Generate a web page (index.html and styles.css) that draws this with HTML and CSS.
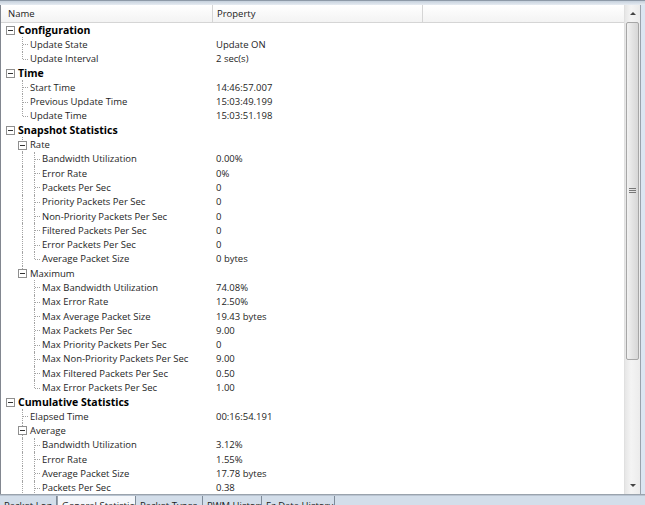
FILE: index.html
```html
<!DOCTYPE html>
<html lang="en">
<head>
    <meta charset="UTF-8">
    <title>General Statistics</title>
    <link rel="stylesheet" href="styles.css">
</head>
<body>
<div class="window">
    <div class="frame-top"></div>
    <div class="main">
        <div class="grid">
            <!-- Column header -->
            <div class="header">
                <div class="hcell hname">Name</div>
                <div class="hcell hprop">Property</div>
                <div class="hcell hrest"></div>
            </div>

            <div class="rows">
                <div class="row"><div class="name"><span class="g box"></span><span class="t root">Configuration</span></div><div class="val"></div></div>
                <div class="row"><div class="name"><span class="g"></span><span class="g tee"></span><span class="t">Update State</span></div><div class="val">Update ON</div></div>
                <div class="row"><div class="name"><span class="g"></span><span class="g elbow"></span><span class="t">Update Interval</span></div><div class="val">2 sec(s)</div></div>

                <div class="row"><div class="name"><span class="g box"></span><span class="t root">Time</span></div><div class="val"></div></div>
                <div class="row"><div class="name"><span class="g"></span><span class="g tee"></span><span class="t">Start Time</span></div><div class="val">14:46:57.007</div></div>
                <div class="row"><div class="name"><span class="g"></span><span class="g tee"></span><span class="t">Previous Update Time</span></div><div class="val">15:03:49.199</div></div>
                <div class="row"><div class="name"><span class="g"></span><span class="g elbow"></span><span class="t">Update Time</span></div><div class="val">15:03:51.198</div></div>

                <div class="row"><div class="name"><span class="g box"></span><span class="t root">Snapshot Statistics</span></div><div class="val"></div></div>
                <div class="row"><div class="name"><span class="g"></span><span class="g box full"></span><span class="t">Rate</span></div><div class="val"></div></div>
                <div class="row"><div class="name"><span class="g"></span><span class="g pipe"></span><span class="g tee"></span><span class="t">Bandwidth Utilization</span></div><div class="val">0.00%</div></div>
                <div class="row"><div class="name"><span class="g"></span><span class="g pipe"></span><span class="g tee"></span><span class="t">Error Rate</span></div><div class="val">0%</div></div>
                <div class="row"><div class="name"><span class="g"></span><span class="g pipe"></span><span class="g tee"></span><span class="t">Packets Per Sec</span></div><div class="val">0</div></div>
                <div class="row"><div class="name"><span class="g"></span><span class="g pipe"></span><span class="g tee"></span><span class="t">Priority Packets Per Sec</span></div><div class="val">0</div></div>
                <div class="row"><div class="name"><span class="g"></span><span class="g pipe"></span><span class="g tee"></span><span class="t">Non-Priority Packets Per Sec</span></div><div class="val">0</div></div>
                <div class="row"><div class="name"><span class="g"></span><span class="g pipe"></span><span class="g tee"></span><span class="t">Filtered Packets Per Sec</span></div><div class="val">0</div></div>
                <div class="row"><div class="name"><span class="g"></span><span class="g pipe"></span><span class="g tee"></span><span class="t">Error Packets Per Sec</span></div><div class="val">0</div></div>
                <div class="row"><div class="name"><span class="g"></span><span class="g pipe"></span><span class="g elbow"></span><span class="t">Average Packet Size</span></div><div class="val">0 bytes</div></div>
                <div class="row"><div class="name"><span class="g"></span><span class="g box last"></span><span class="t">Maximum</span></div><div class="val"></div></div>
                <div class="row"><div class="name"><span class="g"></span><span class="g"></span><span class="g tee"></span><span class="t">Max Bandwidth Utilization</span></div><div class="val">74.08%</div></div>
                <div class="row"><div class="name"><span class="g"></span><span class="g"></span><span class="g tee"></span><span class="t">Max Error Rate</span></div><div class="val">12.50%</div></div>
                <div class="row"><div class="name"><span class="g"></span><span class="g"></span><span class="g tee"></span><span class="t">Max Average Packet Size</span></div><div class="val">19.43 bytes</div></div>
                <div class="row"><div class="name"><span class="g"></span><span class="g"></span><span class="g tee"></span><span class="t">Max Packets Per Sec</span></div><div class="val">9.00</div></div>
                <div class="row"><div class="name"><span class="g"></span><span class="g"></span><span class="g tee"></span><span class="t">Max Priority Packets Per Sec</span></div><div class="val">0</div></div>
                <div class="row"><div class="name"><span class="g"></span><span class="g"></span><span class="g tee"></span><span class="t">Max Non-Priority Packets Per Sec</span></div><div class="val">9.00</div></div>
                <div class="row"><div class="name"><span class="g"></span><span class="g"></span><span class="g tee"></span><span class="t">Max Filtered Packets Per Sec</span></div><div class="val">0.50</div></div>
                <div class="row"><div class="name"><span class="g"></span><span class="g"></span><span class="g elbow"></span><span class="t">Max Error Packets Per Sec</span></div><div class="val">1.00</div></div>

                <div class="row"><div class="name"><span class="g box"></span><span class="t root">Cumulative Statistics</span></div><div class="val"></div></div>
                <div class="row"><div class="name"><span class="g"></span><span class="g tee"></span><span class="t">Elapsed Time</span></div><div class="val">00:16:54.191</div></div>
                <div class="row"><div class="name"><span class="g"></span><span class="g box full"></span><span class="t">Average</span></div><div class="val"></div></div>
                <div class="row"><div class="name"><span class="g"></span><span class="g pipe"></span><span class="g tee"></span><span class="t">Bandwidth Utilization</span></div><div class="val">3.12%</div></div>
                <div class="row"><div class="name"><span class="g"></span><span class="g pipe"></span><span class="g tee"></span><span class="t">Error Rate</span></div><div class="val">1.55%</div></div>
                <div class="row"><div class="name"><span class="g"></span><span class="g pipe"></span><span class="g tee"></span><span class="t">Average Packet Size</span></div><div class="val">17.78 bytes</div></div>
                <div class="row"><div class="name"><span class="g"></span><span class="g pipe"></span><span class="g tee"></span><span class="t">Packets Per Sec</span></div><div class="val">0.38</div></div>
            </div>
        </div>

        <!-- Vertical scrollbar -->
        <div class="scrollbar">
            <div class="sb-btn"><span class="arrow-up"></span></div>
            <div class="sb-thumb"><span class="grip"></span></div>
            <div class="sb-track"></div>
            <div class="sb-btn"><span class="arrow-down"></span></div>
        </div>
        <div class="frame-right"></div>
    </div>

    <!-- Tabs -->
    <div class="tabs">
        <div class="tab w1">Packet Log</div>
        <div class="tab w2 active">General Statistics</div>
        <div class="tab w3">Packet Types</div>
        <div class="tab w4">PWM History</div>
        <div class="tab w5">Ez Data History</div>
    </div>
</div>
</body>
</html>
```

FILE: styles.css
```css
body {
    margin: 0;
    width: 645px;
    height: 505px;
    overflow: hidden;
    font-family: 'Open Sans', 'Noto Sans', sans-serif;
    font-size: 9.5px;
    color: #1e1e1e;
    background: #dbe5f1;
}

.window {
    display: flex;
    flex-direction: column;
    height: 505px;
}

.frame-top {
    flex: none;
    height: 4px;
    border-top: 1px solid #8d99a7;
    background: linear-gradient(#c5d0dc, #e7ecf2);
}

.main {
    flex: none;
    display: flex;
    height: 489px;
    border-bottom: 1px solid #9aa3ad;
}

.grid {
    width: 624px;
    border-left: 1px solid #828790;
    background: #fff;
    overflow: hidden;
}

/* Header */
.header {
    display: flex;
    height: 17px;
    border-bottom: 1px solid #d5d5d5;
    background: linear-gradient(#ffffff, #f3f3f3);
}

.hcell {
    display: flex;
    align-items: center;
    box-sizing: border-box;
    color: #222;
}

.hname {
    width: 212px;
    padding-left: 7px;
    border-right: 1px solid #d5d5d5;
}

.hprop {
    width: 210px;
    padding-left: 4px;
    border-right: 1px solid #d5d5d5;
}

.hrest {
    flex: 1;
}

/* Tree rows */
.row {
    display: flex;
    height: 14.3px;
}

.name {
    width: 212px;
    display: flex;
    align-items: stretch;
    padding-left: 3px;
    box-sizing: border-box;
}

.val {
    display: flex;
    align-items: center;
    padding-left: 3px;
    white-space: nowrap;
}

.t {
    display: flex;
    align-items: center;
    padding-left: 2px;
    white-space: nowrap;
}

.t.root {
    font-weight: bold;
    font-size: 10.5px;
    color: #000;
}

.g {
    position: relative;
    width: 12px;
    flex: none;
}

.pipe::before,
.tee::before,
.elbow::before,
.box.full::before,
.box.last::before {
    content: '';
    position: absolute;
    left: 6px;
    top: 0;
    bottom: 0;
    border-left: 1px dotted #a3a3a3;
}

.elbow::before,
.box.last::before {
    bottom: 50%;
}

.tee::after,
.elbow::after {
    content: '';
    position: absolute;
    left: 7px;
    right: 0;
    top: 50%;
    border-top: 1px dotted #a3a3a3;
}

.box::after {
    content: '';
    position: absolute;
    left: 2px;
    top: 50%;
    width: 7px;
    height: 7px;
    margin-top: -4px;
    border: 1px solid #8f8f8f;
    background: linear-gradient(#333, #333) center / 5px 1px no-repeat, #fff;
}

/* Scrollbar */
.scrollbar {
    width: 16px;
    display: flex;
    flex-direction: column;
    background: linear-gradient(to right, #e6e6e6, #f4f4f4 40%, #ececec);
    border-left: 1px solid #e0e0e0;
    box-sizing: border-box;
}

.sb-btn {
    height: 17px;
    display: flex;
    align-items: center;
    justify-content: center;
}

.arrow-up {
    border: 3px solid transparent;
    border-bottom: 3px solid #444;
    border-top: 0;
}

.arrow-down {
    border: 3px solid transparent;
    border-top: 3px solid #444;
    border-bottom: 0;
}

.sb-thumb {
    height: 336px;
    margin: 0 1px;
    border: 1px solid #a6a6a6;
    border-radius: 2px;
    background: linear-gradient(to right, #f2f2f2, #e3e3e3 50%, #d7d7d7);
    display: flex;
    align-items: center;
    justify-content: center;
}

.grip {
    width: 7px;
    height: 6px;
    background: repeating-linear-gradient(#777 0 1px, transparent 1px 2px);
}

.sb-track {
    flex: 1;
}

.frame-right {
    width: 4px;
    border-left: 1px solid #9aa3ad;
    background: #dce6f2;
}

/* Tabs */
.tabs {
    flex: 1;
    display: flex;
    min-height: 0;
    background: #d3deea;
    border-top: 1px solid #b9c4d1;
}

.tab {
    box-sizing: border-box;
    padding: 3px 0 0 4px;
    border-right: 1px solid #7f8b99;
    white-space: nowrap;
    overflow: hidden;
    color: #222;
}

.w1 { width: 57px; }
.w2 { width: 79px; }
.w3 { width: 67px; }
.w4 { width: 59px; }
.w5 { width: 73px; }

.tab.active {
    background: #f4f7fb;
    padding-top: 3px;
    border-left: 1px solid #9aa3ad;
}
```
